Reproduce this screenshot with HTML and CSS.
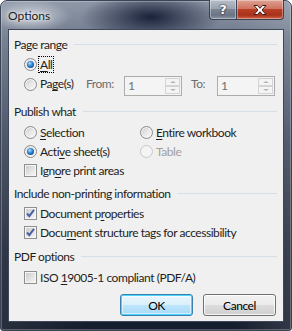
FILE: index.html
```html
<!DOCTYPE html>
<html>
<head>
<meta charset="utf-8">
<link rel="stylesheet" href="styles.css">
</head>
<body>
<div class="window">
  <div class="titlebar">
    <span class="title">Options</span>
    <div class="caption-btns">
      <span class="cbtn help">?</span>
      <span class="cbtn close">
        <svg width="16" height="12" viewBox="0 0 16 12"><path d="M2 1.5 L5.5 1.5 L8 4.3 L10.5 1.5 L14 1.5 L10 6 L14 10.5 L10.5 10.5 L8 7.7 L5.5 10.5 L2 10.5 L6 6 Z" fill="#fff" stroke="#3a1b14" stroke-width="1" stroke-linejoin="round"/></svg>
      </span>
    </div>
  </div>
  <div class="client">
    <div class="group-head g1"><span>Page range</span></div>
    <div class="row r-all">
      <span class="radio checked"></span><span class="label focus"><u>A</u>ll</span>
    </div>
    <div class="row r-pages">
      <span class="radio"></span><span class="label w-pages">Pa<u>g</u>e(s)</span>
      <span class="dis-label w-from">From:</span>
      <span class="spin"><span class="spin-val">1</span><span class="spin-btns"><span class="sb up"></span><span class="sb down"></span></span></span>
      <span class="dis-label w-to">To:</span>
      <span class="spin"><span class="spin-val">1</span><span class="spin-btns"><span class="sb up"></span><span class="sb down"></span></span></span>
    </div>

    <div class="group-head g2"><span>Publish what</span></div>
    <div class="grid2">
      <div class="row r19 col1"><span class="radio"></span><span class="label"><u>S</u>election</span></div>
      <div class="row r19"><span class="radio"></span><span class="label"><u>E</u>ntire workbook</span></div>
      <div class="row r19 col1"><span class="radio checked"></span><span class="label">Acti<u>v</u>e sheet(s)</span></div>
      <div class="row r19"><span class="radio disabled"></span><span class="label disabled">Table</span></div>
      <div class="row r19 col1 span2"><span class="check"></span><span class="label">Ign<u>o</u>re print areas</span></div>
    </div>

    <div class="group-head g3"><span>Include non-printing information</span></div>
    <div class="row r19 first3"><span class="check checked"><svg width="11" height="11" viewBox="0 0 11 11"><path d="M2 5.5 L4.3 8.2 L9 1.8" fill="none" stroke="#4b5fa3" stroke-width="2"/></svg></span><span class="label">Document p<u>r</u>operties</span></div>
    <div class="row r19"><span class="check checked"><svg width="11" height="11" viewBox="0 0 11 11"><path d="M2 5.5 L4.3 8.2 L9 1.8" fill="none" stroke="#4b5fa3" stroke-width="2"/></svg></span><span class="label">Docu<u>m</u>ent structure tags for accessibility</span></div>

    <div class="group-head g4"><span>PDF options</span></div>
    <div class="row r19 first4"><span class="check"></span><span class="label">ISO <u>1</u>9005-1 compliant (PDF/A)</span></div>

    <div class="buttons">
      <span class="btn default">OK</span>
      <span class="btn">Cancel</span>
    </div>
  </div>
</div>
</body>
</html>
```
FILE: styles.css
```css
html, body {
  margin: 0;
  padding: 0;
  background: #ffffff;
}
body {
  font-family: Lato, "Liberation Sans", sans-serif;
  font-size: 12px;
  color: #1e1e1e;
}
.window {
  width: 292px;
  height: 331px;
  box-sizing: border-box;
  padding: 0 7px 8px 7px;
  border-radius: 7px 7px 3px 3px;
  border: 1px solid #3a4454;
  display: flex;
  flex-direction: column;
  background:
    radial-gradient(ellipse 70px 26px at 150px 16px, rgba(20, 28, 52, 0.95) 0%, rgba(20, 28, 52, 0) 100%),
    radial-gradient(ellipse 40px 16px at 30px 15px, rgba(220, 224, 230, 0.8) 0%, rgba(220, 224, 230, 0) 100%),
    linear-gradient(to right, rgba(255,255,255,0.08) 0%, rgba(255,255,255,0) 30%, rgba(255,255,255,0) 80%, rgba(255,255,255,0.12) 100%),
    linear-gradient(to bottom, #8e98a8 0px, #6c7689 40px, #3e485c 140px, #1f2738 250px, #151c2b 331px);
  box-shadow: inset 0 0 0 1px rgba(255, 255, 255, 0.25);
}
.titlebar {
  height: 28px;
  display: flex;
  align-items: flex-start;
  flex-shrink: 0;
}
.title {
  font-size: 12px;
  color: #1a1a1a;
  padding-top: 7px;
  padding-left: 0px;
  text-shadow: 0 0 6px rgba(255,255,255,0.9), 0 0 3px rgba(255,255,255,0.8);
}
.caption-btns {
  margin-left: auto;
  margin-top: -1px;
  display: flex;
  height: 20px;
}
.cbtn {
  height: 20px;
  box-sizing: border-box;
  border: 1px solid #3b4350;
  border-top: none;
  display: flex;
  align-items: center;
  justify-content: center;
  box-shadow: inset 0 0 0 1px rgba(255,255,255,0.35);
}
.help {
  width: 27px;
  border-radius: 0 0 0 4px;
  border-right: none;
  background: linear-gradient(to bottom, #b8bfca 0%, #9aa3b0 45%, #7a8494 50%, #6b7585 80%, #8a95a5 100%);
  color: #fff;
  font-family: "DejaVu Sans", sans-serif;
  font-weight: bold;
  font-size: 13px;
  text-shadow: 0 0 2px #222, 0 0 1px #000;
}
.close {
  width: 48px;
  border-radius: 0 0 4px 0;
  background: linear-gradient(to bottom, #dfa294 0%, #d07361 45%, #b93e25 50%, #a9321b 80%, #d0674a 100%);
}
.client {
  flex: 1;
  border: 1px solid #3f4858;
  background: #f0f0f0;
  padding: 0 6px 0 5px;
  display: flex;
  flex-direction: column;
  letter-spacing: -0.45px;
}
.group-head {
  height: 16px;
  display: flex;
  align-items: center;
  color: #1e1e1e;
}
.group-head::after {
  content: "";
  flex: 1;
  margin-left: 7px;
  border-top: 1px solid #d5dfe5;
}
.g1 { margin-top: 6px; }
.g2 { margin-top: 9px; }
.g3 { margin-top: 5px; }
.g4 { margin-top: 6px; }
.row {
  display: flex;
  align-items: center;
  height: 20px;
  padding-left: 10px;
}
.r19 { height: 19px; }
.r-all { margin-top: 2px; }
.first3 { margin-top: 3px; }
.first4 { margin-top: 4px; }
.grid2 {
  margin-top: 4px;
  display: grid;
  grid-template-columns: 126px 1fr;
}
.grid2 .row:not(.col1) { padding-left: 0; }
.span2 { grid-column: 1 / span 2; }
.label {
  margin-left: 3px;
  white-space: nowrap;
}
.label.disabled { color: #a0a0a0; }
u { text-decoration: underline; text-underline-offset: 2px; text-decoration-thickness: 1px; }
.focus {
  outline: 1px dotted #000;
  outline-offset: 0px;
  padding: 0 1px;
  margin-left: 2px;
}
.radio {
  width: 13px;
  height: 13px;
  box-sizing: border-box;
  border-radius: 50%;
  border: 1px solid #8a8a8a;
  background: linear-gradient(135deg, #c9c9c9 0%, #e8e8e8 50%, #fbfbfb 100%);
  box-shadow: inset 0 0 0 1px #f4f4f4;
  display: flex;
  align-items: center;
  justify-content: center;
  flex-shrink: 0;
}
.radio.checked::after {
  content: "";
  width: 7px;
  height: 7px;
  border-radius: 50%;
  background: radial-gradient(circle at 40% 35%, #b8e4ff 0%, #3c93e0 35%, #14508f 75%, #0d3b6e 100%);
}
.radio.disabled {
  border-color: #c8c8c8;
  background: #f4f4f4;
  box-shadow: none;
}
.check {
  width: 13px;
  height: 13px;
  box-sizing: border-box;
  border: 1px solid #8e8f8f;
  background: linear-gradient(135deg, #c6c8cb 0%, #e4e4e4 55%, #f8f8f8 100%);
  box-shadow: inset 0 0 0 1px #f6f6f6;
  display: flex;
  align-items: center;
  justify-content: center;
  flex-shrink: 0;
}
.r-pages {
  align-items: flex-start;
}
.r-pages > .radio { margin-top: 4px; }
.r-pages > .label, .r-pages > .dis-label { line-height: 20px; }
.w-pages { width: 46px; }
.dis-label { color: #6d6d6d; }
.w-from { width: 38px; }
.w-to { width: 26px; margin-left: 9px; }
.spin {
  margin-top: 2px;
  width: 58px;
  height: 20px;
  box-sizing: border-box;
  border: 1px solid #acacac;
  background: #f4f4f4;
  display: flex;
  flex-shrink: 0;
}
.spin-val {
  flex: 1;
  color: #6d6d6d;
  padding-left: 3px;
  line-height: 18px;
}
.spin-btns {
  width: 15px;
  display: flex;
  flex-direction: column;
  padding: 1px 1px 1px 0;
  gap: 0;
}
.sb {
  flex: 1;
  border: 1px solid #d4d4d4;
  background: #f4f4f4;
  position: relative;
}
.sb::after {
  content: "";
  position: absolute;
  left: 50%;
  top: 50%;
  margin-left: -3px;
  border-left: 3px solid transparent;
  border-right: 3px solid transparent;
}
.sb.up::after { margin-top: -1px; border-bottom: 2px solid #b4b4b4; }
.sb.down::after { margin-top: -1px; border-top: 2px solid #b4b4b4; }
.buttons {
  margin-top: 7px;
  display: flex;
  justify-content: flex-end;
  gap: 10px;
  padding-right: 1px;
}
.btn {
  width: 73px;
  height: 22px;
  box-sizing: border-box;
  border: 1px solid #707070;
  border-radius: 3px;
  background: linear-gradient(to bottom, #f2f2f2 0%, #ebebeb 49%, #dddddd 50%, #cfcfcf 100%);
  box-shadow: inset 0 0 0 1px rgba(255,255,255,0.8);
  display: flex;
  align-items: center;
  justify-content: center;
  color: #000;
}
.btn.default {
  border-color: #3c7fb1;
  box-shadow: inset 0 0 0 1px #48d5f8, inset 0 0 0 2px rgba(255,255,255,0.5);
  background: linear-gradient(to bottom, #eaf6fd 0%, #d9f0fc 49%, #bee6fd 50%, #a7d9f5 100%);
}
```
